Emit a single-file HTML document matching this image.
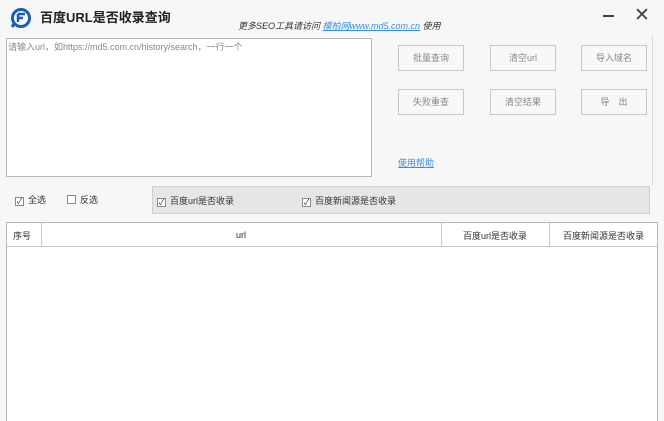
<!DOCTYPE html>
<html><head><meta charset="utf-8"><style>
*{margin:0;padding:0;box-sizing:border-box}
body{width:664px;height:421px;overflow:hidden;background:#f7f7f7;font-family:"Liberation Sans","Noto Sans CJK SC",sans-serif;position:relative;color:#333}
.a{position:absolute}
.btn{position:absolute;width:66px;height:26px;border:1px solid #c8c8c8;background:#f8f8f8;font-size:9px;color:#888;text-align:center;line-height:24px}
.cb{display:inline-block;width:9px;height:9px;border:1px solid #8a8a8a;background:#fff;vertical-align:-1px;margin-right:4px;font-size:8px;line-height:7px;text-align:center;color:#333}
.t{font-size:9px;color:#333;line-height:12px}
</style></head><body>
<svg class="a" style="left:10px;top:7px" width="22" height="22" viewBox="0 0 22 22"><circle cx="11" cy="11" r="8.5" fill="none" stroke="#1a5fb4" stroke-width="3"/><path d="M8 7h7M8 7v8M8 11h5" stroke="#1a5fb4" stroke-width="2.5" fill="none"/><path d="M4 17l-2 3" stroke="#1a5fb4" stroke-width="3"/></svg>
<div class="a" style="left:40px;top:7px;font-size:13px;font-weight:bold;color:#222">百度URL是否收录查询</div>
<div class="a" style="left:238px;top:19px;font-size:9px;font-style:italic;color:#333">更多SEO工具请访问 <span style="color:#3a8ee6;text-decoration:underline">模柏网www.md5.com.cn</span> 使用</div>
<div class="a" style="left:603px;top:15px;width:11px;height:2px;background:#444"></div>
<div class="a" style="left:634px;top:4px;font-size:19px;color:#444;font-weight:300">✕</div>
<div class="a" style="left:6px;top:38px;width:366px;height:139px;background:#fff;border:1px solid #b8b8b8"></div>
<div class="a" style="left:8px;top:40px;font-size:9px;color:#888">请输入url，如https://md5.com.cn/history/search，一行一个</div>
<div class="btn" style="left:398px;top:45px">批量查询</div>
<div class="btn" style="left:490px;top:45px">清空url</div>
<div class="btn" style="left:581px;top:45px">导入域名</div>
<div class="btn" style="left:398px;top:89px">失败重查</div>
<div class="btn" style="left:490px;top:89px">清空结果</div>
<div class="btn" style="left:581px;top:89px">导　出</div>
<div class="a" style="left:398px;top:156px;font-size:9px;color:#3a8ee6;text-decoration:underline">使用帮助</div>
<div class="a" style="left:652px;top:36px;width:1px;height:150px;background:#ddd"></div>
<div class="a" style="left:152px;top:186px;width:498px;height:28px;background:#e6e6e6;border:1px solid #d0d0d0"></div>
<div class="a t" style="left:15px;top:194px"><span class="cb">✓</span>全选</div>
<div class="a t" style="left:67px;top:194px"><span class="cb" style="border-color:#6b8ec9"></span>反选</div>
<div class="a t" style="left:157px;top:195px"><span class="cb">✓</span>百度url是否收录</div>
<div class="a t" style="left:302px;top:195px"><span class="cb">✓</span>百度新闻源是否收录</div>
<div class="a" style="left:6px;top:222px;width:652px;height:199px;background:#fff;border:1px solid #b8b8b8;border-bottom:none"></div>
<div class="a" style="left:7px;top:223px;width:650px;height:24px;border-bottom:1px solid #c8c8c8"></div>
<div class="a" style="left:41px;top:223px;width:1px;height:24px;background:#c8c8c8"></div>
<div class="a" style="left:441px;top:223px;width:1px;height:24px;background:#c8c8c8"></div>
<div class="a" style="left:549px;top:223px;width:1px;height:24px;background:#c8c8c8"></div>
<div class="a t" style="left:13px;top:230px">序号</div>
<div class="a t" style="left:236px;top:229px">url</div>
<div class="a t" style="left:463px;top:230px">百度url是否收录</div>
<div class="a t" style="left:563px;top:230px">百度新闻源是否收录</div>
</body></html>
